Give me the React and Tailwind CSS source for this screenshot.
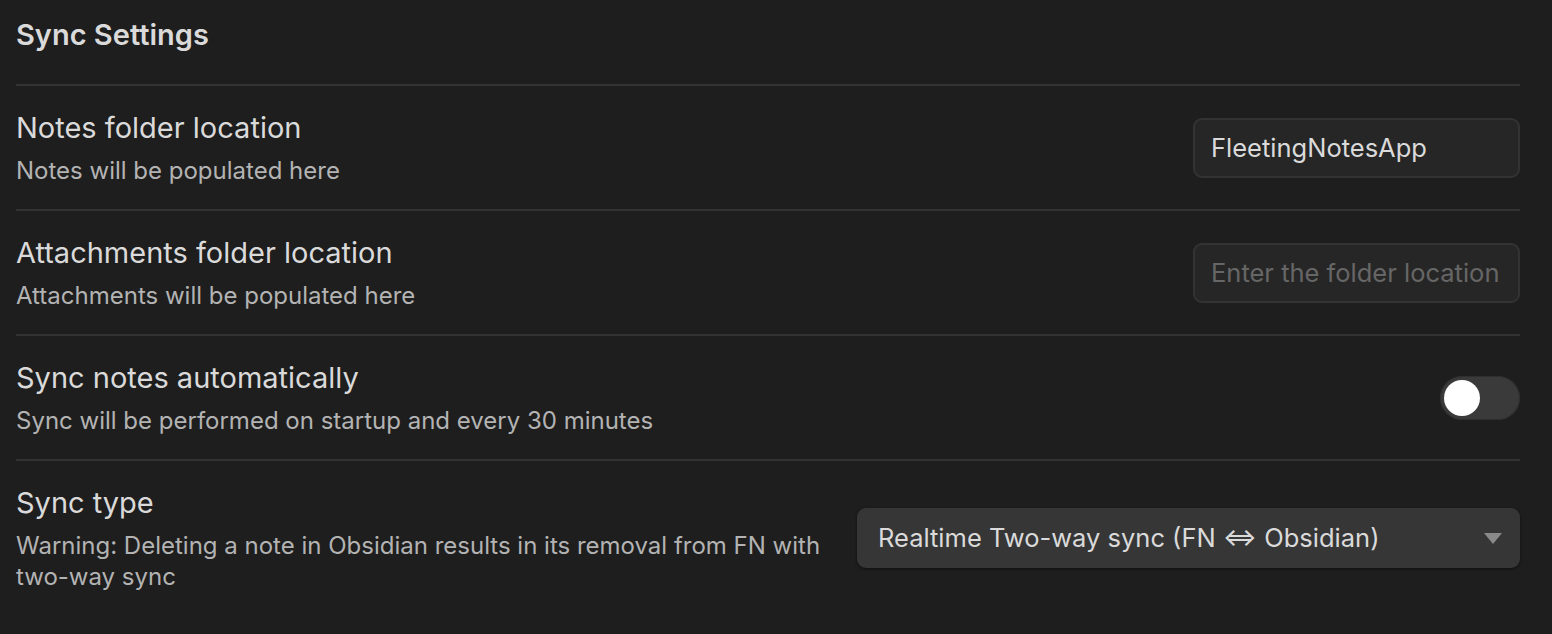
import React from "react";

const font = { fontFamily: "Inter, 'Noto Sans', sans-serif" };

function Row({ name, desc, children }) {
  return (
    <div className="flex items-center border-t-2 border-[#333333] py-[23px]">
      <div className="flex-1 min-w-0 pr-[24px]">
        <div className="text-[29px] leading-[38px] text-[#dadada]">{name}</div>
        <div className="mt-[8px] text-[24px] leading-[31px] text-[#b3b3b3]">{desc}</div>
      </div>
      <div className="flex shrink-0 items-center">{children}</div>
    </div>
  );
}

export default function App() {
  return (
    <div className="min-h-[634px] w-full bg-[#1e1e1e] pl-[16px] pr-[32px]" style={font}>
      <div className="pt-[16px] pb-[30px] text-[29px] leading-[38px] font-semibold text-[#dadada]">
        Sync Settings
      </div>
      <Row name="Notes folder location" desc="Notes will be populated here">
        <input
          readOnly
          value="FleetingNotesApp"
          className="h-[60px] w-[327px] rounded-[9px] border-2 border-[#333333] bg-[#262626] pl-[16px] pr-[8px] text-[25.5px] text-[#dadada] outline-none"
          style={font}
        />
      </Row>
      <Row name="Attachments folder location" desc="Attachments will be populated here">
        <input
          readOnly
          placeholder="Enter the folder location"
          className="h-[60px] w-[327px] rounded-[9px] border-2 border-[#333333] bg-[#262626] pl-[16px] pr-[8px] text-[25.5px] text-[#dadada] outline-none placeholder:text-[#666666]"
          style={font}
        />
      </Row>
      <Row name="Sync notes automatically" desc="Sync will be performed on startup and every 30 minutes">
        <div className="flex h-[44px] w-[80px] items-center rounded-full bg-[#3a3a3a] px-[4px] shadow-[inset_0_0_0_1px_#2e2e2e]">
          <div className="h-[36px] w-[36px] rounded-full bg-white" />
        </div>
      </Row>
      <Row
        name="Sync type"
        desc={
          <>
            Warning: Deleting a note in Obsidian results in its removal from FN with{" "}
            <span className="whitespace-nowrap">two-way sync</span>
          </>
        }
      >
        <div className="flex h-[60px] w-[663px] items-center justify-between rounded-[9px] bg-[#363636] pl-[21px] pr-[18px] text-[25.5px] text-[#dadada] shadow-[0_1px_3px_rgba(0,0,0,0.5)]">
          <span>Realtime Two-way sync (FN ⇔ Obsidian)</span>
          <svg width="18" height="11" viewBox="0 0 18 11">
            <path d="M0 0 L18 0 L9 11 Z" fill="#8a8a8a" />
          </svg>
        </div>
      </Row>
    </div>
  );
}
